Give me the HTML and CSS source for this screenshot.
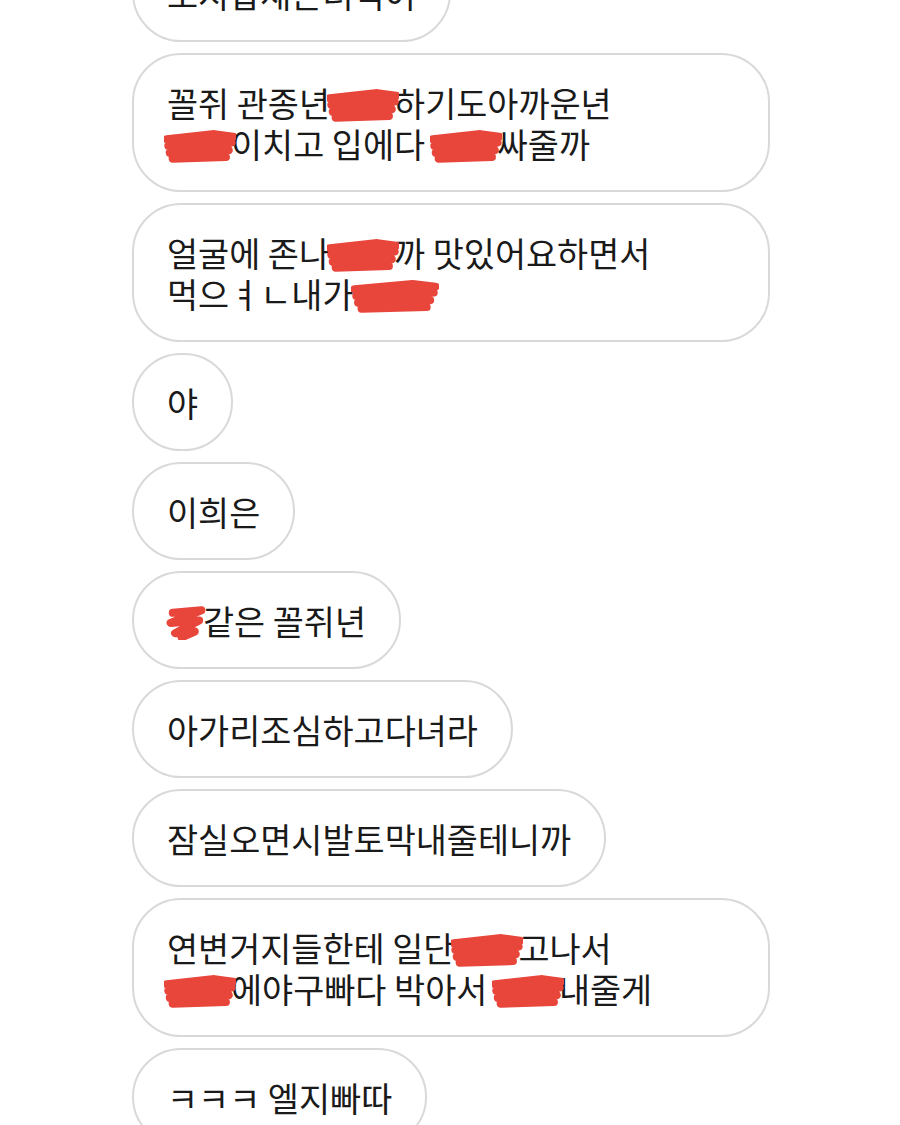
FILE: index.html
```html
<!DOCTYPE html>
<html>
  <head>
    <title>메시지</title>
    <meta name="viewport" content="width=device-width, initial-scale=1.0" />
    <link rel="stylesheet" href="styles.css">
  </head>
  <body>
    <svg class="defs" width="0" height="0">
      <symbol id="scrib" viewBox="0 0 100 40" preserveAspectRatio="none">
        <path d="M4 12 L70 6 L96 9 L6 20 L94 16 L8 28 L90 25 L12 35 L86 33" fill="none" stroke="#e8453b" stroke-width="8" stroke-linecap="round" stroke-linejoin="round" vector-effect="non-scaling-stroke" />
      </symbol>
      <symbol id="zig" viewBox="0 0 40 40" preserveAspectRatio="none">
        <path d="M8 8 L34 5 L6 20 L32 17 L10 32 L28 30 L16 37" fill="none" stroke="#e8453b" stroke-width="8" stroke-linecap="round" stroke-linejoin="round" vector-effect="non-scaling-stroke" />
      </symbol>
    </svg>

    <div class="chat">
      <div class="bubble cut">오지랍재는더먹어</div>

      <div class="bubble wide">
        꼴쥐 관종년<span class="blot w2"><svg><use href="#scrib" /></svg></span>하기도아까운년<br>
        <span class="blot w2"><svg><use href="#scrib" /></svg></span>이치고 입에다 <span class="blot w2"><svg><use href="#scrib" /></svg></span>싸줄까
      </div>

      <div class="bubble wide">
        얼굴에 존나<span class="blot w2"><svg><use href="#scrib" /></svg></span>까 맛있어요하면서<br>
        먹으ㅕㄴ내가<span class="blot w3"><svg><use href="#scrib" /></svg></span>
      </div>

      <div class="bubble">야</div>
      <div class="bubble">이희은</div>
      <div class="bubble"><span class="blot w1"><svg><use href="#zig" /></svg></span>같은 꼴쥐년</div>
      <div class="bubble">아가리조심하고다녀라</div>
      <div class="bubble">잠실오면시발토막내줄테니까</div>

      <div class="bubble wide">
        연변거지들한테 일단<span class="blot w2"><svg><use href="#scrib" /></svg></span>고나서<br>
        <span class="blot w2"><svg><use href="#scrib" /></svg></span>에야구빠다 박아서 <span class="blot w2"><svg><use href="#scrib" /></svg></span>내줄게
      </div>

      <div class="bubble">ㅋㅋㅋ 엘지빠따</div>
    </div>
  </body>
</html>
```

FILE: styles.css
```css
body {
  margin: 0;
  background-color: #ffffff;
  font-family: "Noto Sans CJK KR", "Noto Sans", sans-serif;
  color: #1a1a1a;
  overflow: hidden;
}
.defs {
  position: absolute;
}
.chat {
  display: flex;
  flex-direction: column;
  align-items: flex-start;
  gap: 11px;
  padding-left: 132px;
  margin-top: -56px;
}
.bubble {
  box-sizing: border-box;
  border: 2px solid #d9d9d9;
  border-radius: 49px;
  background-color: #ffffff;
  padding: 27px 33px 26px;
  font-size: 33.8px;
  line-height: 41px;
  white-space: nowrap;
}
.wide {
  width: 638px;
}
/* red marker scribbles over the blanked words */
.blot {
  display: inline-block;
  position: relative;
  height: 30px;
  vertical-align: -4px;
}
.blot svg {
  position: absolute;
  left: -3px;
  top: -3px;
  width: calc(100% + 8px);
  height: calc(100% + 4px);
  overflow: visible;
}
.w1 {
  width: 36px;
}
.w2 {
  width: 64px;
}
.w3 {
  width: 80px;
}
```
